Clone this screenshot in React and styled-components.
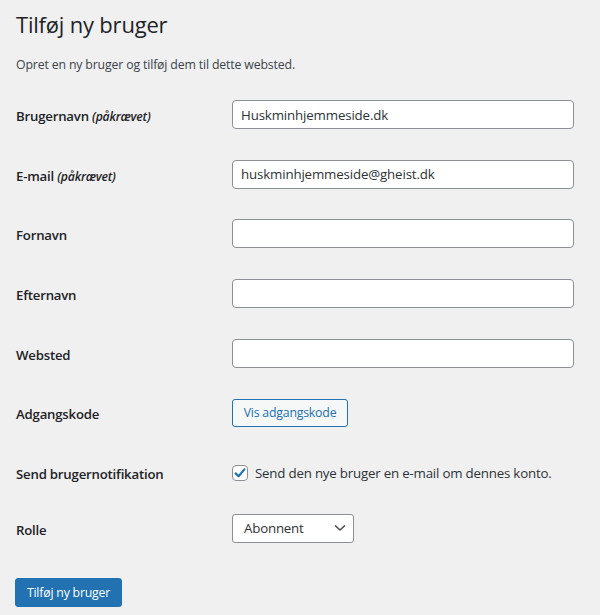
import React from "react";
import styled, { createGlobalStyle } from "styled-components";

const GlobalStyle = createGlobalStyle`
  html, body {
    margin: 0;
    padding: 0;
    background: #f0f0f1;
  }
  body {
    font-family: "Open Sans", "Noto Sans", sans-serif;
    color: #1d2327;
    font-size: 13px;
  }
`;

const Page = styled.div`
  padding: 7px 26px 0 16px;
  min-height: 615px;
  box-sizing: border-box;
`;

const Title = styled.h1`
  margin: 0;
  font-size: 22px;
  font-weight: 400;
  line-height: 34px;
  letter-spacing: -0.2px;
  color: #1d2327;
`;

const Intro = styled.p`
  margin: 14px 0 0;
  font-size: 12.3px;
  line-height: 20px;
  color: #3c434a;
  letter-spacing: -0.15px;
`;

const Form = styled.form`
  display: flex;
  flex-direction: column;
  margin-top: 10px;
`;

const Row = styled.div`
  display: grid;
  grid-template-columns: 216px 1fr;
  align-items: center;
  min-height: ${props => props.h || 59.6}px;
`;

const Label = styled.label`
  font-size: 13.2px;
  font-weight: 600;
  letter-spacing: -0.2px;
  padding-top: 3px;
  color: #1d2327;
  em {
    font-size: 12.2px;
    font-style: italic;
  }
`;

const TextInput = styled.input`
  box-sizing: border-box;
  width: 342px;
  height: 29px;
  border: 1px solid #8c8f94;
  border-radius: 4px;
  background: #fff;
  padding: 0 8px;
  font-family: inherit;
  font-size: 13.3px;
  letter-spacing: -0.15px;
  color: #2c3338;
  outline: none;
`;

const SecondaryButton = styled.button`
  box-sizing: border-box;
  height: 28px;
  width: 116px;
  border: 1px solid #2271b1;
  border-radius: 3px;
  background: #f6f7f7;
  color: #2271b1;
  font-family: inherit;
  font-size: 12.3px;
  letter-spacing: -0.2px;
  padding: 0;
  cursor: pointer;
`;

const CheckLine = styled.label`
  display: flex;
  align-items: center;
  gap: 7px;
  font-size: 13.3px;
  letter-spacing: -0.2px;
  color: #2c3338;
  padding-top: 2px;
`;

const Box = styled.span`
  box-sizing: border-box;
  width: 16px;
  height: 16px;
  border: 1px solid #8c8f94;
  border-radius: 4px;
  background: #fff;
  display: inline-flex;
  align-items: center;
  justify-content: center;
  flex: none;
`;

const SelectBox = styled.div`
  box-sizing: border-box;
  width: 122px;
  height: 29px;
  border: 1px solid #8c8f94;
  border-radius: 3px;
  background: #fff;
  display: flex;
  align-items: center;
  justify-content: space-between;
  padding: 0 7px 0 11px;
  font-size: 13.3px;
  letter-spacing: -0.2px;
  color: #2c3338;
`;

const Submit = styled.button`
  align-self: flex-start;
  margin-top: 23px;
  box-sizing: border-box;
  height: 29px;
  width: 107px;
  margin-left: -1px;
  border: 1px solid #2271b1;
  border-radius: 3px;
  background: #2271b1;
  color: #fff;
  font-family: inherit;
  font-size: 12.3px;
  letter-spacing: -0.2px;
  padding: 0;
  cursor: pointer;
`;

const fields = [
  { label: "Brugernavn", required: true, value: "Huskminhjemmeside.dk" },
  { label: "E-mail", required: true, value: "huskminhjemmeside@gheist.dk" },
  { label: "Fornavn", value: "" },
  { label: "Efternavn", value: "" },
  { label: "Websted", value: "" },
];

export default function App() {
  return (
    <Page>
      <GlobalStyle />
      <Title>Tilføj ny bruger</Title>
      <Intro>Opret en ny bruger og tilføj dem til dette websted.</Intro>
      <Form onSubmit={e => e.preventDefault()}>
        {fields.map(f => (
          <Row key={f.label}>
            <Label>
              {f.label} {f.required && <em>(påkrævet)</em>}
            </Label>
            <TextInput defaultValue={f.value} />
          </Row>
        ))}
        <Row>
          <Label>Adgangskode</Label>
          <div>
            <SecondaryButton type="button">Vis adgangskode</SecondaryButton>
          </div>
        </Row>
        <Row>
          <Label>Send brugernotifikation</Label>
          <CheckLine>
            <Box>
              <svg width="14" height="14" viewBox="0 0 14 14">
                <path d="M2.6 7.4 L5.6 10.3 L11.4 3.4" fill="none" stroke="#2271b1" strokeWidth="2.2" strokeLinecap="round" strokeLinejoin="round" />
              </svg>
            </Box>
            Send den nye bruger en e-mail om dennes konto.
          </CheckLine>
        </Row>
        <Row h={52.6}>
          <Label>Rolle</Label>
          <SelectBox>
            <span>Abonnent</span>
            <svg width="12" height="8" viewBox="0 0 12 8">
              <path d="M1.5 1.8 L6 6 L10.5 1.8" fill="none" stroke="#50575e" strokeWidth="1.6" strokeLinecap="round" strokeLinejoin="round" />
            </svg>
          </SelectBox>
        </Row>
        <Submit type="submit">Tilføj ny bruger</Submit>
      </Form>
    </Page>
  );
}
